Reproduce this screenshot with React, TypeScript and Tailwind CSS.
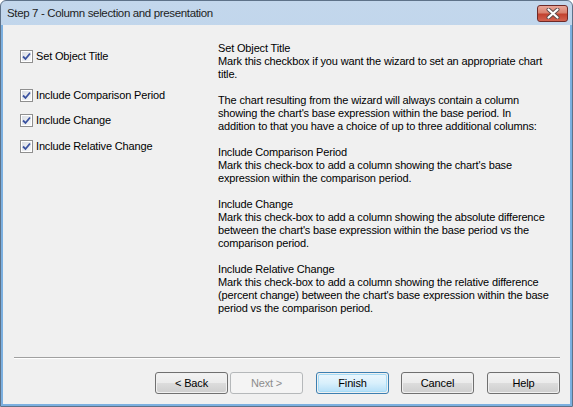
// wizard dialog - step 7, column selection and presentation

const OPTIONS = [
  { label: 'Set Object Title', mt: 'mt-[8px]' },
  { label: 'Include Comparison Period', mt: 'mt-[26px]' },
  { label: 'Include Change', mt: 'mt-[12px]' },
  { label: 'Include Relative Change', mt: 'mt-[13px]' },
];

const HELP_LINES = [
  'Set Object Title',
  'Mark this checkbox if you want the wizard to set an appropriate chart',
  'title.',
  '',
  'The chart resulting from the wizard will always contain a column',
  "showing the chart's base expression within the base period. In",
  'addition to that you have a choice of up to three additional columns:',
  '',
  'Include Comparison Period',
  "Mark this check-box to add a column showing the chart's base",
  'expression within the comparison period.',
  '',
  'Include Change',
  'Mark this check-box to add a column showing the absolute difference',
  "between the chart's base expression within the base period vs the",
  'comparison period.',
  '',
  'Include Relative Change',
  'Mark this check-box to add a column showing the relative difference',
  "(percent change) between the chart's base expression within the base",
  'period vs the comparison period.',
];

function CheckBox() {
  return (
    <div className="w-[13px] h-[13px] shrink-0 border border-[#8f8f8f] bg-white p-px">
      <div className="w-full h-full bg-gradient-to-br from-[#d9dde4] to-[#f6f7f8] flex items-center justify-center">
        <svg width="9" height="9" viewBox="0 0 9 9">
          <path d="M1 4.5 L3.5 7 L8 1.5" fill="none" stroke="#3a52a0" strokeWidth="1.8" />
        </svg>
      </div>
    </div>
  );
}

function Button({ label, kind }: { label: string; kind?: 'default' | 'disabled' }) {
  if (kind === 'disabled') {
    return (
      <div className="w-[73px] h-[22px] rounded-[3px] border border-[#b5b8ba] bg-[#f4f4f4] flex items-center justify-center text-[#8d8d8d]">
        {label}
      </div>
    );
  }
  if (kind === 'default') {
    return (
      <div className="w-[73px] h-[22px] rounded-[3px] border border-[#3c7fb1] p-px">
        <div className="w-full h-full rounded-[2px] border border-[#a6dcf6] bg-gradient-to-b from-[#eaf6fd] via-[#d9f0fc] to-[#b9e1f8] flex items-center justify-center">
          {label}
        </div>
      </div>
    );
  }
  return (
    <div className="w-[73px] h-[22px] rounded-[3px] border border-[#707070] p-px">
      <div className="w-full h-full rounded-[2px] bg-[linear-gradient(#f2f2f2_0%,#ebebeb_50%,#dddddd_50%,#cfcfcf_100%)] flex items-center justify-center">
        {label}
      </div>
    </div>
  );
}

export default function App() {
  return (
    <div className="w-[573px] h-[407px] bg-white font-['Liberation_Sans',Arial,sans-serif] text-[11px] tracking-[-0.15px] text-black">
      <div className="w-full h-full flex flex-col rounded-t-[6px] border border-[#5e7289] bg-gradient-to-b from-[#c3d7ec] to-[#a9c7e6]">
        {/* title bar */}
        <div className="h-[24px] flex items-start justify-between pl-[6px] pr-[4px] shrink-0">
          <span className="mt-[5px] text-[11.5px] tracking-[-0.35px] leading-[14px] text-[#1e1e1e]">Step 7 - Column selection and presentation</span>
          <div className="mt-[4px] w-[31px] h-[17px] rounded-[3px] border border-[#6e2a28] bg-[linear-gradient(#e9a698_0%,#d9826f_45%,#c2422f_55%,#d36350_100%)] flex items-center justify-center">
            <svg width="14" height="11" viewBox="0 0 14 11">
              <path d="M2.5 1.5 L11.5 9.5 M11.5 1.5 L2.5 9.5" stroke="#5b4a4a" strokeWidth="4" strokeLinecap="round" />
              <path d="M2.5 1.5 L11.5 9.5 M11.5 1.5 L2.5 9.5" stroke="#ffffff" strokeWidth="2.2" strokeLinecap="round" />
            </svg>
          </div>
        </div>

        {/* client area */}
        <div className="flex-1 flex flex-col border-x-2 border-b-2 border-[#7cb0e0] bg-[#f0f0f0]">
          <div className="flex-1 flex pt-[17px]">
            <div className="w-[215px] pl-[17px] flex flex-col">
              {OPTIONS.map(o => (
                <div key={o.label} className={`${o.mt} h-[13px] flex items-center gap-[3px]`}>
                  <CheckBox />
                  <span className="leading-[13px]">{o.label}</span>
                </div>
              ))}
            </div>
            <div className="flex-1 leading-[13px]">
              {HELP_LINES.map((line, i) => (
                <div key={i} className="h-[13px] whitespace-nowrap">{line}</div>
              ))}
            </div>
          </div>

          <div className="mx-[11px] mr-[10px] border-t border-[#a0a0a0] border-b border-b-white" />

          <div className="flex justify-end items-center pt-[13px] pb-[10px] pr-[10px]">
            <Button label="< Back" />
            <div className="ml-[2px]"><Button label="Next >" kind="disabled" /></div>
            <div className="ml-[13px]"><Button label="Finish" kind="default" /></div>
            <div className="ml-[12px]"><Button label="Cancel" /></div>
            <div className="ml-[13px]"><Button label="Help" /></div>
          </div>
        </div>
      </div>
    </div>
  );
}
